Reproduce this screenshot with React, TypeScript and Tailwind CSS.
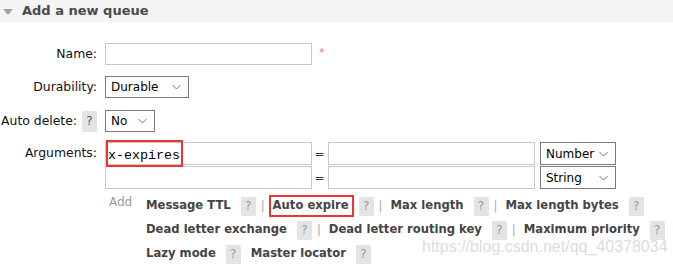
import React from "react";

const Q = () => (
  <span className="inline-flex items-center justify-center w-[15px] h-[19px] bg-[#e4e4e4] text-[#999] font-normal text-[12px] leading-none">?</span>
);

const Sep = () => <span className="text-[#aaa] font-normal ml-[5px] mr-[8px]">|</span>;

const Chevron = () => (
  <svg width="9" height="6" viewBox="0 0 9 6" className="shrink-0">
    <path d="M0.5 1 L4.5 5 L8.5 1" fill="none" stroke="#777" strokeWidth="1" />
  </svg>
);

const Select = ({ value, w }: { value: string; w: string }) => (
  <div className={`${w} h-full border border-[#7a7a7a] bg-white flex items-center justify-between pl-[5px] pr-[7px] text-[12px] text-black`}>
    <span>{value}</span>
    <Chevron />
  </div>
);

const Label = ({ children }: { children: React.ReactNode }) => (
  <div className="w-[97px] shrink-0 flex items-center justify-end gap-[5px] text-[12.4px] text-[#111] whitespace-nowrap">{children}</div>
);

const RedBox = ({ children, l, r, t, b }: { children: React.ReactNode; l: string; r: string; t: string; b: string }) => (
  <span className="relative">
    {children}
    <span className={`absolute ${l} ${r} ${t} ${b} border-2 border-[#ef3333]`} />
  </span>
);

export default function App() {
  return (
    <div className="relative w-[673px] h-[265px] bg-white overflow-hidden" style={{ fontFamily: '"DejaVu Sans", Verdana, sans-serif' }}>
      <div className="h-[22px] bg-[#f5f5f5] flex items-center">
        <svg width="10" height="6" viewBox="0 0 10 6" className="ml-[3px] mt-[1px]">
          <path d="M0 0 L10 0 L5 6 Z" fill="#a0a0a0" />
        </svg>
        <span className="ml-[9px] text-[13px] font-bold text-[#4a4a4a]">Add a new queue</span>
      </div>

      <div className="pt-[21px]">
        <div className="flex h-[22px] items-stretch">
          <Label>Name:</Label>
          <div className="ml-[8px] w-[207px] border border-[#c8c8c8]" />
          <span className="ml-[7px] text-[#f07a7a] text-[11px] leading-none mt-[4px]">*</span>
        </div>

        <div className="flex h-[22px] mt-[11px]">
          <Label>Durability:</Label>
          <div className="ml-[8px] h-full">
            <Select value="Durable" w="w-[84px]" />
          </div>
        </div>

        <div className="flex h-[22px] mt-[12px]">
          <Label>
            <span>Auto delete:</span>
            <span className="h-[21px] w-[15px] bg-[#e4e4e4] text-[#555] flex items-center justify-center text-[12px]">?</span>
          </Label>
          <div className="ml-[8px] h-[22px]">
            <Select value="No" w="w-[50px]" />
          </div>
        </div>

        <div className="flex mt-[10px]">
          <div className="w-[97px] shrink-0 h-[22px] flex items-center justify-end text-[12.4px] text-[#111]">Arguments:</div>
          <div className="ml-[8px] flex flex-col gap-[1px]">
            <div className="flex h-[23px] items-stretch">
              <div className="w-[207px] border border-[#c8c8c8] flex items-center pl-[2px]">
                <RedBox l="-left-[2px]" r="-right-[3px]" t="-top-[2px]" b="-bottom-[1px]">
                  <span className="text-[13.33px] text-black" style={{ fontFamily: '"Liberation Mono", monospace' }}>x-expires</span>
                </RedBox>
              </div>
              <span className="w-[15px] text-center text-[12px] text-[#333] self-center">=</span>
              <div className="ml-[1px] w-[207px] border border-[#c8c8c8]" />
              <div className="ml-[5px] h-full">
                <Select value="Number" w="w-[76px]" />
              </div>
            </div>
            <div className="flex h-[23px] items-stretch">
              <div className="w-[207px] border border-[#c8c8c8]" />
              <span className="w-[15px] text-center text-[12px] text-[#333] self-center">=</span>
              <div className="ml-[1px] w-[207px] border border-[#c8c8c8]" />
              <div className="ml-[5px] h-full">
                <Select value="String" w="w-[76px]" />
              </div>
            </div>
          </div>
        </div>

        <div className="flex mt-[5px]">
          <div className="ml-[109px] w-[37px] text-[12px] text-[#999] leading-none pt-[2px]">Add</div>
          <div className="flex flex-col text-[11.6px] font-bold text-[#444] whitespace-nowrap">
            <div className="flex items-center h-[24px]">
              <span>Message TTL</span>
              <span className="ml-[10px]"><Q /></span>
              <Sep />
              <RedBox l="-left-[4px]" r="-right-[5px]" t="-top-[2px]" b="-bottom-[2px]">
                <span>Auto expire</span>
              </RedBox>
              <span className="ml-[10px]"><Q /></span>
              <Sep />
              <span>Max length</span>
              <span className="ml-[10px]"><Q /></span>
              <Sep />
              <span>Max length bytes</span>
              <span className="ml-[10px]"><Q /></span>
            </div>
            <div className="flex items-center h-[24px]">
              <span>Dead letter exchange</span>
              <span className="ml-[10px]"><Q /></span>
              <Sep />
              <span>Dead letter routing key</span>
              <span className="ml-[10px]"><Q /></span>
              <Sep />
              <span>Maximum priority</span>
              <span className="ml-[10px]"><Q /></span>
            </div>
            <div className="flex items-center h-[24px]">
              <span>Lazy mode</span>
              <span className="ml-[10px]"><Q /></span>
              <span className="ml-[10px]">Master locator</span>
              <span className="ml-[10px]"><Q /></span>
            </div>
          </div>
        </div>
      </div>

      <div className="absolute left-[422px] top-[235px] text-[16px] text-[#dcdcdc] pointer-events-none whitespace-nowrap" style={{ fontFamily: '"Liberation Sans", Arial, sans-serif' }}>
        https://blog.csdn.net/qq_40378034
      </div>
    </div>
  );
}
